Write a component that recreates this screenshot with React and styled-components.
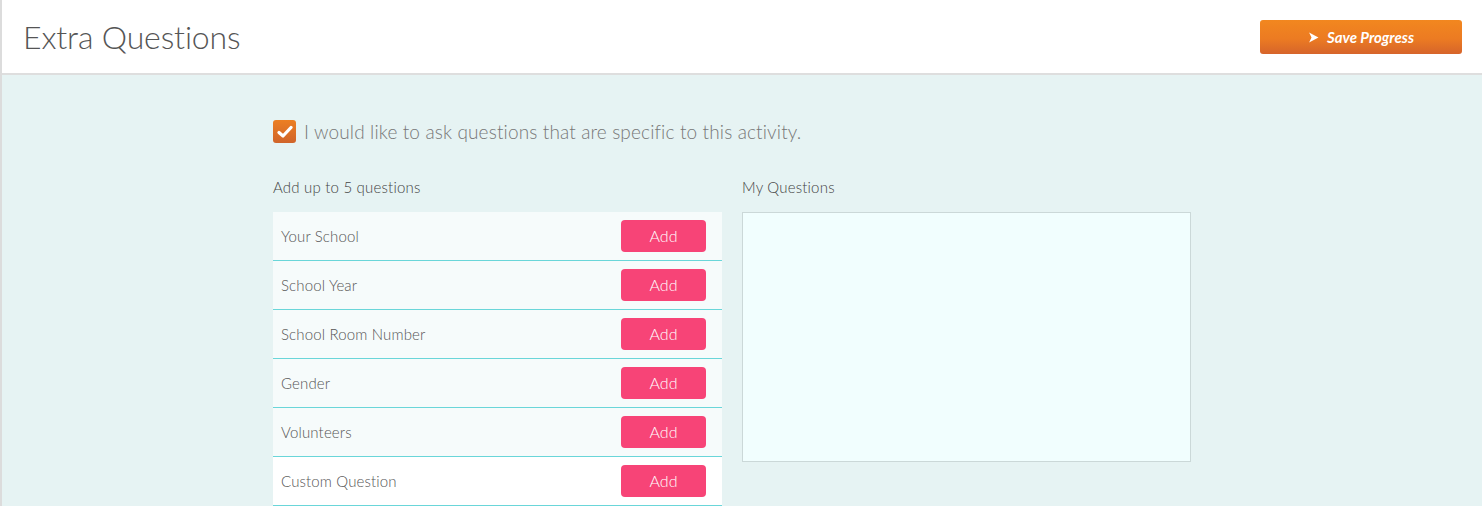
import React, { useState } from "react";
import styled, { createGlobalStyle } from "styled-components";

const QUESTIONS = [
  "Your School",
  "School Year",
  "School Room Number",
  "Gender",
  "Volunteers",
  "Custom Question",
];

const App = () => {
  const [checked, setChecked] = useState(true);
  return (
    <Page>
      <GlobalStyle />
      <Header>
        <Title>Extra Questions</Title>
        <SaveButton type="button">
          <Arrow viewBox="0 0 10 10" aria-hidden="true">
            <path d="M1 0.5 L9.5 5 L1 9.5 L3.2 5 Z" fill="#fff" />
          </Arrow>
          Save Progress
        </SaveButton>
      </Header>
      <Content>
        <Inner>
          <CheckRow onClick={() => setChecked(!checked)}>
            <CheckBox $checked={checked}>
              {checked && (
                <svg width="16" height="14" viewBox="0 0 16 14" aria-hidden="true">
                  <path
                    d="M2 7.5 L6 11 L14 2.5"
                    fill="none"
                    stroke="#fff"
                    strokeWidth="3.2"
                    strokeLinecap="round"
                    strokeLinejoin="round"
                  />
                </svg>
              )}
            </CheckBox>
            <CheckLabel>
              I would like to ask questions that are specific to this activity.
            </CheckLabel>
          </CheckRow>
          <Columns>
            <Column>
              <ColumnLabel>Add up to 5 questions</ColumnLabel>
              <List>
                {QUESTIONS.map((q, i) => (
                  <Row key={q} $last={i === QUESTIONS.length - 1}>
                    <RowText>{q}</RowText>
                    <AddButton type="button">Add</AddButton>
                  </Row>
                ))}
              </List>
            </Column>
            <Column>
              <ColumnLabel>My Questions</ColumnLabel>
              <MyBox />
            </Column>
          </Columns>
        </Inner>
      </Content>
    </Page>
  );
};

const GlobalStyle = createGlobalStyle`
  html, body {
    margin: 0;
    padding: 0;
    background: #e6f3f3;
  }
  body {
    font-family: Lato, "Open Sans", "Liberation Sans", sans-serif;
  }
  button {
    appearance: none;
    border: 0;
    font-family: inherit;
    cursor: pointer;
  }
`;

const Page = styled.div`
  min-height: 506px;
  border-left: 2px solid #dcdcdc;
  background: #e6f3f3;
`;

const Header = styled.header`
  height: 73px;
  background: #fff;
  border-bottom: 2px solid #dedede;
  display: flex;
  align-items: center;
  justify-content: space-between;
  padding: 0 20px 0 21px;
`;

const Title = styled.h1`
  margin: 0;
  font-size: 32px;
  font-weight: 300;
  color: #555;
  letter-spacing: -0.15px;
`;

const SaveButton = styled.button`
  display: flex;
  align-items: center;
  justify-content: center;
  gap: 8px;
  width: 202px;
  height: 34px;
  margin-top: 1px;
  border-radius: 3px;
  background: linear-gradient(to bottom, #f2871f 0%, #ec7b22 55%, #d6642b 100%);
  color: #fff;
  font-size: 15px;
  font-weight: 700;
  font-style: italic;
`;

const Arrow = styled.svg`
  width: 11px;
  height: 11px;
`;

const Content = styled.main`
  padding: 45px 0 0 271px;
`;

const Inner = styled.div`
  width: 918px;
`;

const CheckRow = styled.label`
  display: flex;
  align-items: center;
  gap: 8px;
  cursor: pointer;
`;

const CheckBox = styled.span`
  width: 23px;
  height: 23px;
  border-radius: 3px;
  background: ${(p) =>
    p.$checked ? "linear-gradient(to bottom, #ec7f22, #d0642a)" : "#fff"};
  border: ${(p) => (p.$checked ? "0" : "1px solid #bbb")};
  display: flex;
  align-items: center;
  justify-content: center;
`;

const CheckLabel = styled.span`
  font-size: 19px;
  font-weight: 300;
  color: #777;
  letter-spacing: 0.14px;
`;

const Columns = styled.div`
  display: flex;
  gap: 20px;
  margin-top: 35px;
`;

const Column = styled.div`
  width: 449px;
  display: flex;
  flex-direction: column;
`;

const ColumnLabel = styled.div`
  font-size: 15px;
  font-weight: 300;
  color: #444;
  letter-spacing: 0.2px;
  height: 18px;
  line-height: 18px;
  margin-bottom: 16px;
`;

const List = styled.div`
  display: flex;
  flex-direction: column;
`;

const Row = styled.div`
  height: 48px;
  background: ${(p) => (p.$last ? "#fff" : "#f6fbfb")};
  border-bottom: 1px solid #6ad6d9;
  display: flex;
  align-items: center;
  justify-content: space-between;
  padding: 0 16px 0 8px;
`;

const RowText = styled.span`
  font-size: 15px;
  font-weight: 300;
  color: #555;
  letter-spacing: 0.15px;
`;

const AddButton = styled.button`
  width: 85px;
  height: 32px;
  border-radius: 4px;
  background: #f74477;
  color: #fff;
  font-size: 16px;
  font-weight: 300;
  line-height: 30px;
`;

const MyBox = styled.div`
  height: 248px;
  background: #f1fefe;
  border: 1px solid #cbd8d8;
`;

export default App;
